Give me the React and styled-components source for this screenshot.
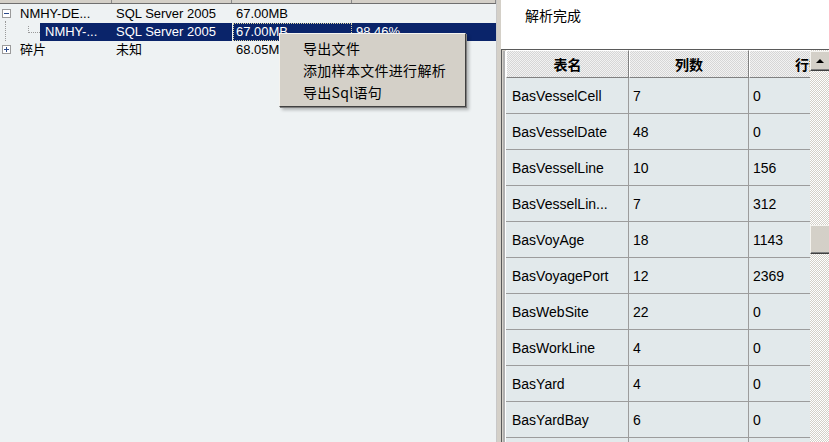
import React from "react";
import styled, { createGlobalStyle, css } from "styled-components";

const Global = createGlobalStyle`
  html, body { margin: 0; padding: 0; }
  body {
    width: 829px; height: 442px; overflow: hidden; background: #fff;
    font-family: "Liberation Sans", "Noto Sans CJK SC", sans-serif;
  }
`;

const Screen = styled.div`
  display: grid;
  grid-template-columns: 497px 4px 1fr;
  width: 829px;
  height: 442px;
  overflow: hidden;
`;

/* ---------- left tree ---------- */
const LeftPane = styled.div`
  position: relative;
  display: grid;
  grid-template-rows: 4px 1fr 6px 2px;
  background: #eef2f3;
  border-right: 1px solid #c8c8c8;
  font-size: 13px;
  color: #000;
`;

const HeadStrip = styled.div`
  display: grid;
  grid-template-columns: 112px 120px 120px 1fr;
  background: #d4d0c8;
  border-bottom: 1px solid #6f6f6f;
  & > div { border-right: 1px solid #8a8a8a; }
`;

const TreeBody = styled.div`
  display: flex;
  flex-direction: column;
  padding-top: 1px;
`;

const TreeRow = styled.div`
  display: grid;
  grid-template-columns: 112px 120px 120px 1fr;
  height: 18px;
  line-height: 18px;
  white-space: nowrap;
`;

const NameCell = styled.div`
  position: relative;
  display: flex;
  align-items: center;
`;

const Expander = styled.span`
  position: absolute;
  left: 2px;
  top: 4px;
  width: 7px;
  height: 7px;
  border: 1px solid #9a9a9a;
  background: #fff;
  &::before {
    content: "";
    position: absolute;
    left: 1px; right: 1px; top: 3px; height: 1px; background: #2a4a8a;
  }
  ${(p) => p.plus && css`
    &::after {
      content: "";
      position: absolute;
      top: 1px; bottom: 1px; left: 3px; width: 1px; background: #2a4a8a;
    }
  `}
`;

const Label = styled.span`
  padding-left: ${(p) => p.indent}px;
  ${(p) => p.selected && css`
    margin-left: ${p.offset}px;
    padding-left: 5px;
    flex: 1;
    align-self: stretch;
    background: #0a246a;
    color: #fff;
  `}
`;

const Cell = styled.div`
  padding-left: 4px;
  overflow: hidden;
  ${(p) => p.selected && css`
    background: #0a246a;
    color: #fff;
  `}
  ${(p) => p.focus && css`
    outline: 1px dotted #d8d0a0;
    outline-offset: -1px;
    padding-left: 3px;
    margin-left: 1px;
  `}
`;

const VLine = styled.span`
  position: absolute;
  left: 5px;
  top: -2px;
  height: 20px;
  border-left: 1px dotted #9a9a9a;
`;

const Elbow = styled.span`
  position: absolute;
  left: 28px;
  top: 3px;
  width: 11px;
  height: 6px;
  border-left: 1px dotted #9a9a9a;
  border-bottom: 1px dotted #9a9a9a;
`;

const BottomGray = styled.div`
  background: #d4d0c8;
`;

const BottomHead = styled.div`
  display: grid;
  grid-template-columns: 118px 120px 1fr;
  background: #d4d0c8;
  border-top: 1px solid #6f6f6f;
  & > div { border-right: 1px solid #6f6f6f; }
`;

/* ---------- context menu ---------- */
const Menu = styled.div`
  position: absolute;
  left: 279px;
  top: 33px;
  width: 185px;
  padding: 3px 0;
  background: #d4d0c8;
  border-top: 1px solid #f4f3ef;
  border-left: 1px solid #f4f3ef;
  border-right: 1px solid #404040;
  border-bottom: 1px solid #404040;
  box-shadow: 1px 1px 0 #808080, 3px 3px 3px rgba(0, 0, 0, 0.25);
  z-index: 5;
`;

const MenuItem = styled.div`
  height: 22px;
  line-height: 22px;
  padding-left: 23px;
  font-size: 14px;
  letter-spacing: 0.3px;
  color: #000;
  font-family: "Noto Sans CJK SC", sans-serif;
  white-space: nowrap;
`;

/* ---------- splitter ---------- */
const Splitter = styled.div`
  background: #d4d0c8;
`;

/* ---------- right pane ---------- */
const RightPane = styled.div`
  display: flex;
  flex-direction: column;
  background: #fff;
  min-width: 0;
`;

const Status = styled.div`
  height: 49px;
  padding: 5px 0 0 24px;
  box-sizing: border-box;
  font-family: "Noto Sans CJK SC", sans-serif;
  font-size: 14px;
  color: #000;
`;

const Frame = styled.div`
  flex: 1;
  display: flex;
  border-top: 1px solid #5a5a5a;
  border-left: 1px solid #5a5a5a;
  box-shadow: inset 1px 1px 0 #d4d0c8, inset 3px 0 0 #b0b0b0;
  padding-left: 4px;
  min-height: 0;
`;

const GridArea = styled.div`
  width: 304px;
  overflow: hidden;
  flex-shrink: 0;
`;

const Table = styled.div`
  display: grid;
  grid-template-columns: 123px 120px 120px;
  width: 363px;
`;

const HeadCell = styled.div`
  height: 28px;
  box-sizing: border-box;
  display: flex;
  align-items: center;
  justify-content: center;
  font-family: "Noto Sans CJK SC", sans-serif;
  font-weight: 700;
  font-size: 14px;
  color: #000;
  background-color: #ececec;
  background-image: repeating-conic-gradient(#d6d6d6 0 25%, #f2f2f2 0 50%);
  background-size: 2px 2px;
  border-top: 1px solid #fff;
  border-left: 1px solid #fff;
  border-right: 1px solid #808080;
  border-bottom: 1px solid #808080;
`;

const DataCell = styled.div`
  height: 36px;
  box-sizing: border-box;
  display: flex;
  align-items: center;
  padding-left: ${(p) => (p.first ? 6 : 4)}px;
  background: #e2e9eb;
  border-right: 1px solid #9c9c9c;
  border-bottom: 1px solid #9c9c9c;
  font-size: 14px;
  color: #000;
  white-space: nowrap;
  overflow: hidden;
`;

const ScrollBar = styled.div`
  position: relative;
  flex: 1;
  background-color: #eee;
  background-image: repeating-conic-gradient(#d4d0c8 0 25%, #fff 0 50%);
  background-size: 2px 2px;
`;

const ScrollBtn = styled.div`
  position: absolute;
  left: 0;
  right: -2px;
  top: ${(p) => p.top}px;
  height: ${(p) => p.h}px;
  background: #d4d0c8;
  border-top: 1px solid #f4f3ef;
  border-left: 1px solid #f4f3ef;
  border-bottom: 1px solid #404040;
  box-shadow: inset -1px -1px 0 #808080;
  display: flex;
  align-items: center;
  justify-content: center;
  padding-right: 2px;
  box-sizing: border-box;
`;

const Arrow = styled.span`
  width: 0;
  height: 0;
  border-left: 4px solid transparent;
  border-right: 4px solid transparent;
  border-bottom: 4px solid #000;
`;

const rows = [
  ["BasVesselCell", "7", "0"],
  ["BasVesselDate", "48", "0"],
  ["BasVesselLine", "10", "156"],
  ["BasVesselLin...", "7", "312"],
  ["BasVoyAge", "18", "1143"],
  ["BasVoyagePort", "12", "2369"],
  ["BasWebSite", "22", "0"],
  ["BasWorkLine", "4", "0"],
  ["BasYard", "4", "0"],
  ["BasYardBay", "6", "0"],
  ["", "", ""],
];

export default function App() {
  return (
    <>
      <Global />
      <Screen>
        <LeftPane>
          <HeadStrip>
            <div /><div /><div /><div />
          </HeadStrip>
          <TreeBody>
            <TreeRow>
              <NameCell>
                <Expander />
                <Label indent={20}>NMHY-DE...</Label>
              </NameCell>
              <Cell>SQL Server 2005</Cell>
              <Cell>67.00MB</Cell>
              <Cell />
            </TreeRow>
            <TreeRow>
              <NameCell>
                <VLine />
                <Elbow />
                <Label selected offset={40}>NMHY-...</Label>
              </NameCell>
              <Cell selected>SQL Server 2005</Cell>
              <Cell selected focus>67.00MB</Cell>
              <Cell selected>98.46%</Cell>
            </TreeRow>
            <TreeRow>
              <NameCell>
                <Expander plus />
                <Label indent={20}>碎片</Label>
              </NameCell>
              <Cell>未知</Cell>
              <Cell>68.05MB</Cell>
              <Cell />
            </TreeRow>
          </TreeBody>
          <BottomGray />
          <BottomHead>
            <div /><div /><div />
          </BottomHead>
          <Menu>
            <MenuItem>导出文件</MenuItem>
            <MenuItem>添加样本文件进行解析</MenuItem>
            <MenuItem>导出Sql语句</MenuItem>
          </Menu>
        </LeftPane>
        <Splitter />
        <RightPane>
          <Status>解析完成</Status>
          <Frame>
            <GridArea>
              <Table>
                <HeadCell>表名</HeadCell>
                <HeadCell>列数</HeadCell>
                <HeadCell>行数</HeadCell>
                {rows.map((r, i) =>
                  r.map((v, j) => (
                    <DataCell key={i + "-" + j} first={j === 0}>
                      {v}
                    </DataCell>
                  ))
                )}
              </Table>
            </GridArea>
            <ScrollBar>
              <ScrollBtn top={1} h={20}>
                <Arrow />
              </ScrollBtn>
              <ScrollBtn top={175} h={29} />
            </ScrollBar>
          </Frame>
        </RightPane>
      </Screen>
    </>
  );
}
